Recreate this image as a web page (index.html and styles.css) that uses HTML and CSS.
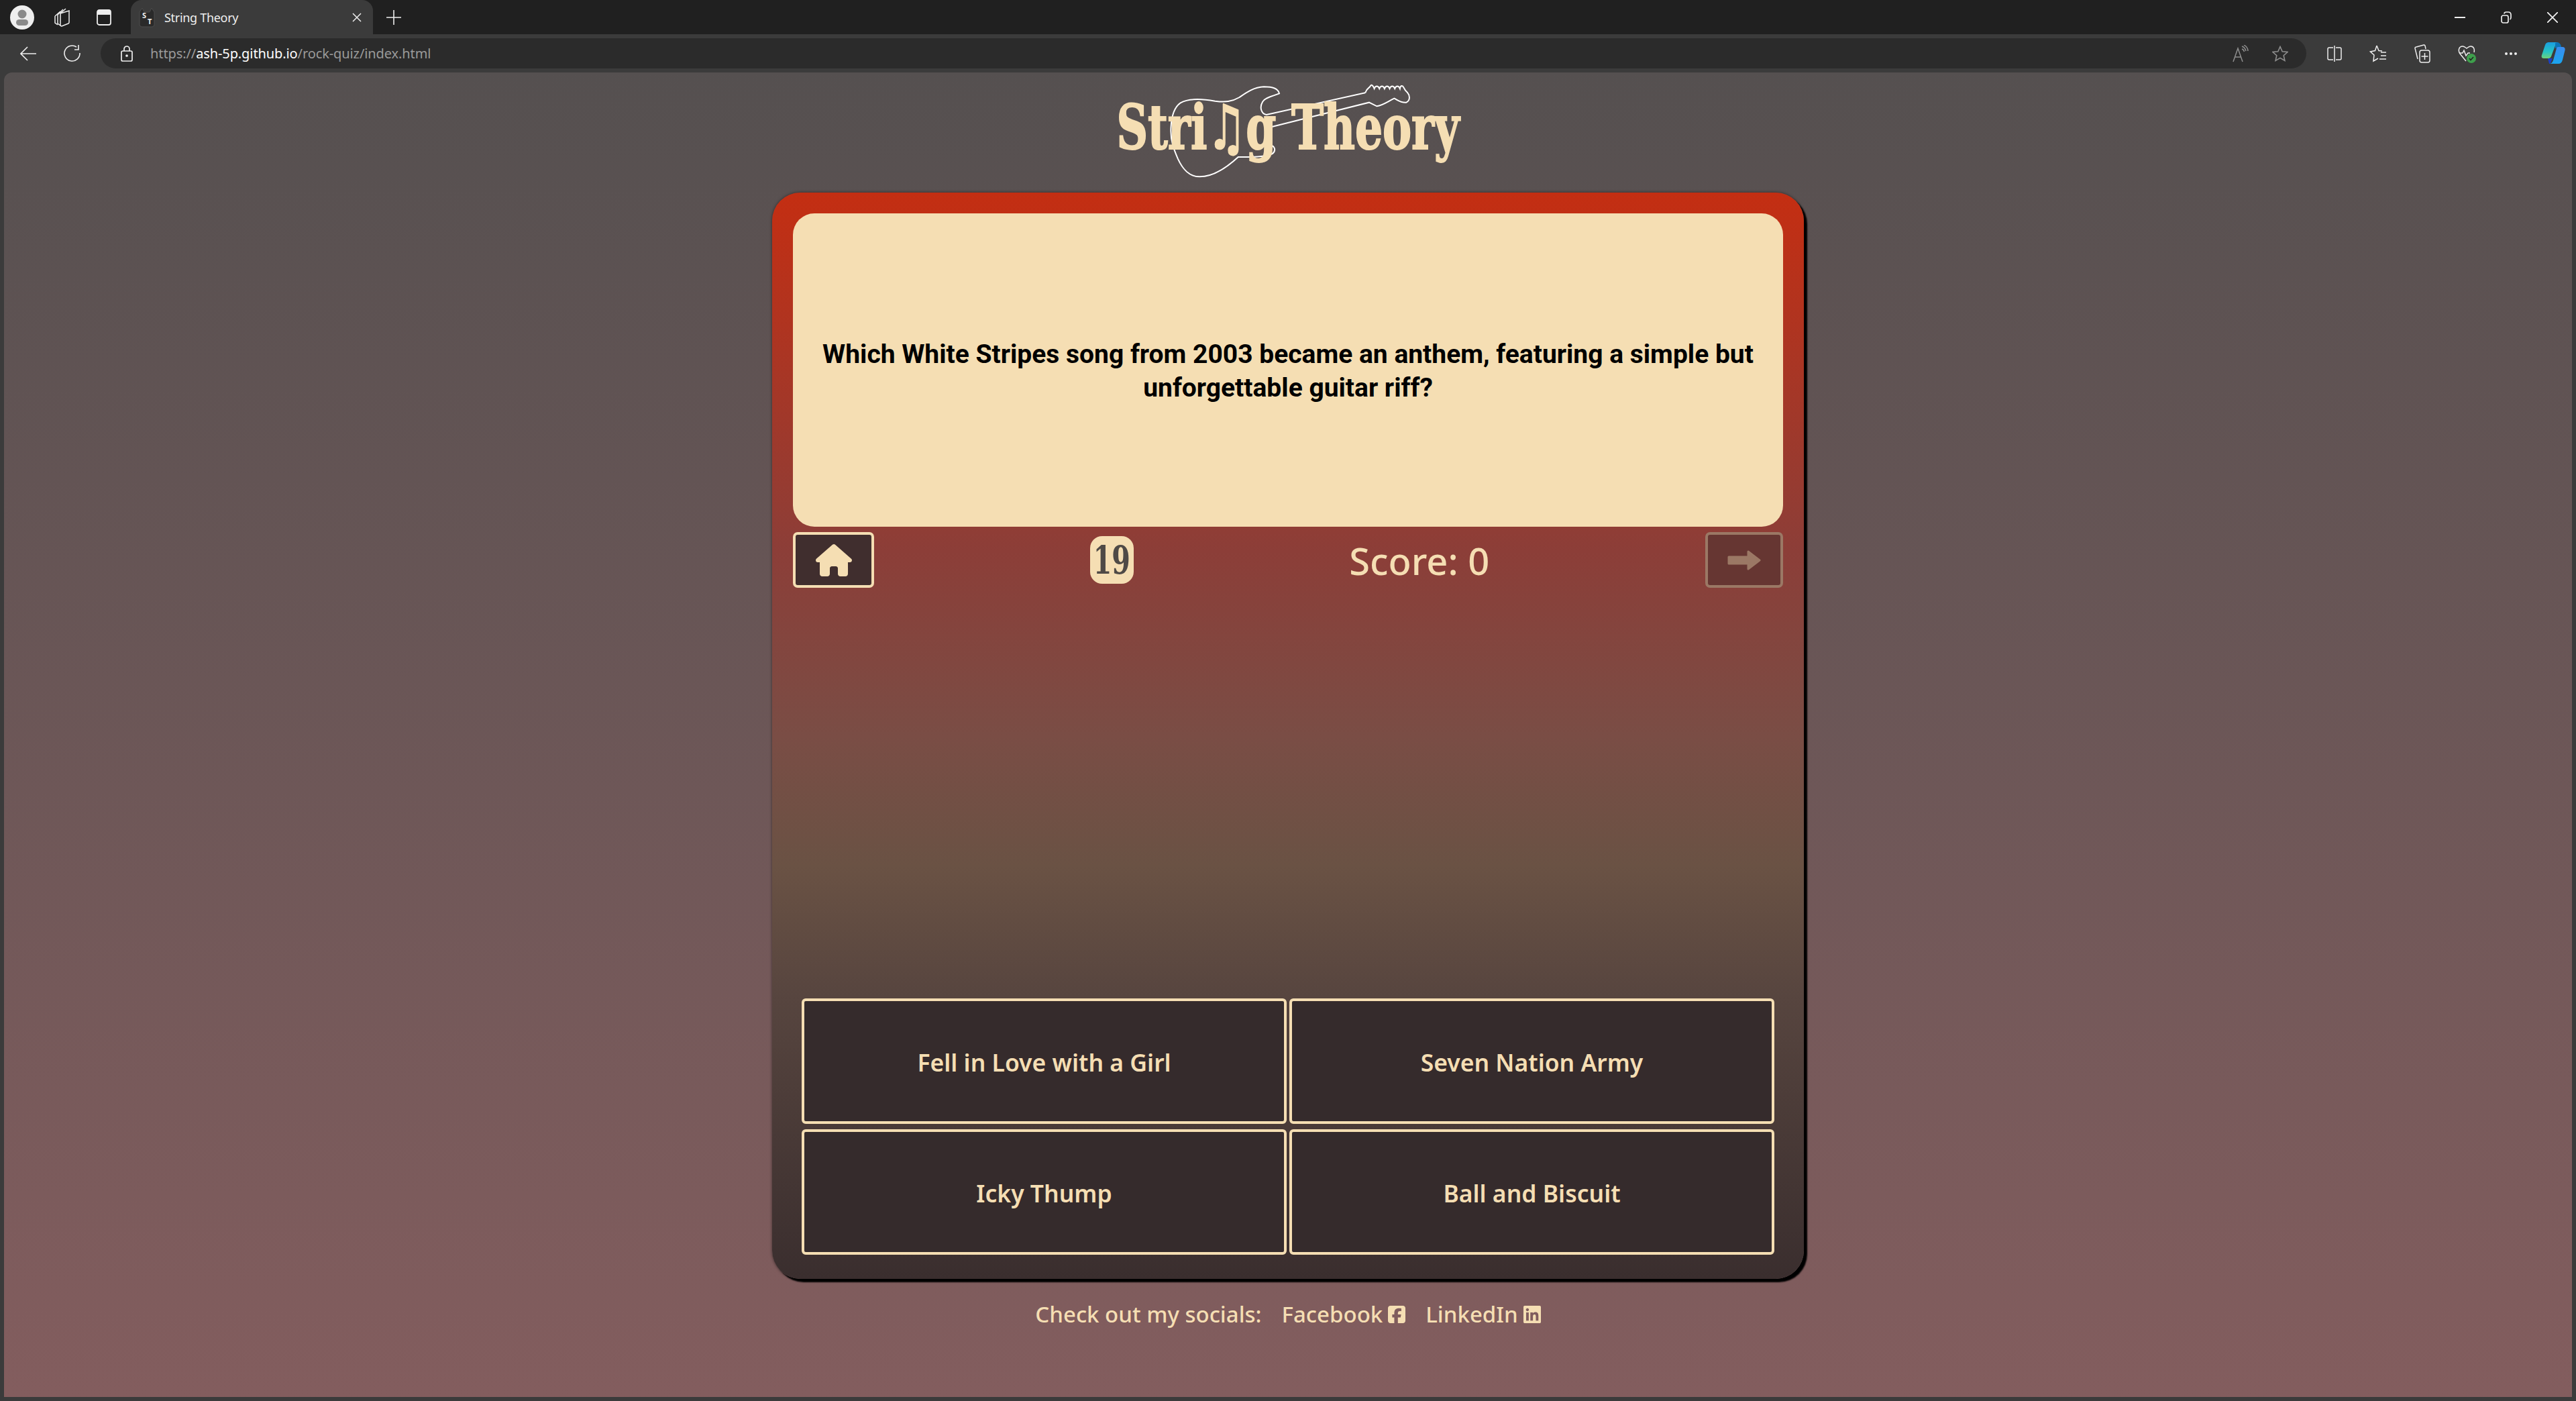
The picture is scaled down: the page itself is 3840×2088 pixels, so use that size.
FILE: index.html
```html
<!DOCTYPE html>
<html lang="en">
<head>
  <meta charset="UTF-8">
  <title>String Theory</title>
  <link rel="stylesheet" href="styles.css">
</head>
<body>

  <div class="tabstrip">
    <div class="avatar">
      <svg width="36" height="36" viewBox="0 0 36 36"><circle cx="18" cy="18" r="18" fill="#eee"/><circle cx="18" cy="13" r="6.5" fill="#8a8a8a"/><rect x="9" y="21" width="18" height="9" rx="4.5" fill="#8a8a8a"/></svg>
    </div>
    <svg class="strip-icon workspaces" width="26" height="30" viewBox="0 0 26 30" fill="none" stroke="#eee" stroke-width="1.500"><path d="M10 9 23 5v17a2 2 0 0 1-1 2l-10 4a2 2 0 0 1-2-2z"/><path d="M10 9 18 2M6 11 14 3M6 11v13l4 3M2 13 10 6M2 13v10l4 3"/></svg>
    <svg class="strip-icon verttabs" width="22" height="24" viewBox="0 0 22 24" fill="none" stroke="#eee" stroke-width="1.800"><rect x="1" y="1" width="20" height="22" rx="3"/><path d="M2 2h18v5H2z" fill="#eee"/></svg>
    <div class="tab">
      <svg class="favicon" width="24" height="30" viewBox="0 0 24 30"><path d="M5 1 8 7h8l3-6 4 6v20l-3 2H4l-3-2V7z" fill="#2a2a2a" stroke="#4c4c4c"/><text x="5" y="16" class="fav-letter">S</text><text x="13" y="25" class="fav-letter">T</text></svg>
      <span class="tab-title">String Theory</span>
      <svg class="tab-close" width="14" height="14" viewBox="0 0 14 14" stroke="#eee" stroke-width="1.500"><path d="M1 1l12 12M13 1 1 13"/></svg>
    </div>
    <svg class="newtab" width="22" height="22" viewBox="0 0 22 22" stroke="#eee" stroke-width="1.600"><path d="M11 0v22M0 11h22"/></svg>
    <div class="window-btns">
      <svg width="16" height="16" viewBox="0 0 16 16" stroke="#eee" stroke-width="2"><path d="M0 8h16"/></svg>
      <svg width="16" height="18" viewBox="0 0 16 18" fill="none" stroke="#eee" stroke-width="1.700"><rect x="1" y="6" width="10" height="11" rx="2.500"/><path d="M5 3.500C5 2 6 1 8 1h3c3 0 4 1.500 4 4v4c0 1.500-.5 2.500-1.500 3"/></svg>
      <svg width="16" height="16" viewBox="0 0 16 16" stroke="#eee" stroke-width="1.800"><path d="M0 0l16 16M16 0 0 16"/></svg>
    </div>
  </div>

  <div class="toolbar">
    <svg class="back" width="24" height="22" viewBox="0 0 24 22" fill="none" stroke="#eee" stroke-width="1.600"><path d="M24 11H1M11 1 1 11l10 10"/></svg>
    <svg class="reload" width="26" height="26" viewBox="0 0 26 26" fill="none" stroke="#eee" stroke-width="1.600"><path d="M19 3a11.500 11.500 0 1 0 5 9"/><path d="M19 1v7h-6" transform="translate(3 -1)"/></svg>
    <div class="addressbar">
      <svg class="lock" width="18" height="24" viewBox="0 0 18 24" fill="none" stroke="#eee" stroke-width="1.700"><rect x="1" y="8" width="16" height="15" rx="2"/><path d="M5 8V5a4 4 0 0 1 8 0v3"/><circle cx="9" cy="15" r="1" fill="#eee"/></svg>
      <span class="url">https://<b>ash-5p.github.io</b>/rock-quiz/index.html</span>
      <div class="addr-right">
        <svg width="24" height="26" viewBox="0 0 24 26" fill="none" stroke="#8f8f8f" stroke-width="1.500"><path d="M1 25 8 5l7 20M3.500 18h9"/><path d="M14 2c3 1 5 3 6 7M14 6c2 .5 3 2 3.500 4M17 0c3 2 6 4 6 9"/></svg>
        <svg width="24" height="24" viewBox="0 0 24 24" fill="none" stroke="#8f8f8f" stroke-width="1.600"><path d="M12 1.500l3.200 7.200 7.800.8-5.800 5.200 1.700 7.700L12 18.400l-6.900 4 1.700-7.700L1 9.500l7.800-.8z"/></svg>
      </div>
    </div>
    <div class="tool-icons">
      <svg width="22" height="26" viewBox="0 0 22 26" fill="none" stroke="#eee" stroke-width="1.500"><path d="M9 4H3a2 2 0 0 0-2 2v14a2 2 0 0 0 2 2h6M13 4h6a2 2 0 0 1 2 2v14a2 2 0 0 1-2 2h-6M11 1v24"/></svg>
      <svg width="26" height="28" viewBox="0 0 26 28" fill="none" stroke="#eee" stroke-width="1.500"><path d="M11 2 8.500 9.500 1.500 11l5.500 5-1 9 7-4M11 2l3 7.500 5 .5"/><path d="M17 12h8M17 17h8M15 22h10"/></svg>
      <svg width="24" height="28" viewBox="0 0 24 28" fill="none" stroke="#eee" stroke-width="1.500"><path d="M5 22 1 6a2 2 0 0 1 2-2l11-3a2 2 0 0 1 2 1l1 5"/><rect x="8" y="9" width="15" height="18" rx="3"/><path d="M15.500 13v10M10.500 18h10"/></svg>
      <svg width="28" height="30" viewBox="0 0 28 30" fill="none"><path d="M12 26 3 15C0 11 1 4 7 4c3 0 4 2 6 3 2-1 3-3 6-3 5 0 6 5 5 9" stroke="#eee" stroke-width="1.500"/><path d="M2 14h5l2-4 3 8 3-4h3" stroke="#eee" stroke-width="1.500"/><circle cx="20" cy="22" r="7" fill="#3e9f4c"/><path d="M17 22l2 2.500 4-4.500" stroke="#222" stroke-width="1.500"/></svg>
      <svg width="20" height="6" viewBox="0 0 20 6" fill="#eee"><circle cx="3" cy="3" r="2"/><circle cx="10" cy="3" r="2"/><circle cx="17" cy="3" r="2"/></svg>
      <svg class="copilot" width="36" height="36" viewBox="0 0 36 36">
        <defs>
          <linearGradient id="copA" x1="0" y1="0" x2="0" y2="1"><stop offset="0" stop-color="#1a9de0"/><stop offset=".6" stop-color="#27c4c2"/><stop offset="1" stop-color="#6fd07a"/></linearGradient>
          <linearGradient id="copB" x1="0" y1="0" x2="0" y2="1"><stop offset="0" stop-color="#3b8cf0"/><stop offset="1" stop-color="#1aa5ee"/></linearGradient>
        </defs>
        <path d="M10 25h7l-3 7c-.5 1-1 1-2 1z" fill="#1b3fc4"/>
        <path d="M11 1h16c-3 0-5 2-6 5L15 22c-1 2-2 3-4 3H4c-3 0-4-2-3-5L6 5c1-3 3-4 5-4z" fill="url(#copA)"/>
        <path d="M21 2c2-1 5-1 7 1 1 1 2 3 2 6l-9 1z" fill="#0b72b5"/>
        <path d="M25 8h7c3 0 4 2 3.500 5L32 27c-1 4-3 6-6 6H12c3 0 5-2 6-5l5-18c.3-1 1-2 2-2z" fill="url(#copB)"/>
      </svg>
    </div>
  </div>

  <main class="page">
    <header class="logo">
      <svg class="guitar" viewBox="0 0 1568 510" preserveAspectRatio="none" fill="none" stroke="#fff" stroke-width="2">
        <path vector-effect="non-scaling-stroke" d="M1085 85 700 183C680 180 672 150 685 125C695 105 725 100 750 88C745 65 725 58 690 58C650 60 620 85 595 105C565 125 540 128 500 122C450 112 395 110 365 130C340 150 330 190 328 240C325 300 340 340 355 380C375 430 400 460 440 460C490 460 540 425 590 372C640 372 700 372 722 358C738 345 735 322 712 318L690 322"/>
        <path vector-effect="non-scaling-stroke" d="M700 243 1100 128 1130 145C1155 140 1175 122 1198 110C1212 118 1222 130 1245 128C1262 118 1258 95 1250 85C1240 75 1238 70 1235 62C1230 50 1222 52 1220 66C1215 52 1205 52 1200 66C1195 52 1185 52 1180 66C1175 52 1165 52 1160 66C1155 52 1145 52 1140 66C1135 52 1125 52 1120 66C1115 50 1108 46 1105 55C1100 65 1092 62 1085 85"/>
      </svg>
      <h1 class="wordmark">Stri<span class="note">♫</span>g Theory</h1>
    </header>

    <section class="quiz-card">
      <div class="question">
        <p>Which White Stripes song from 2003 became an anthem, featuring a simple but unforgettable guitar riff?</p>
      </div>

      <div class="controls">
        <button class="square-btn">
          <svg width="54" height="48" viewBox="0 0 576 512" fill="#f5deb3"><path d="M575.800 255.500c0 18-15 32.100-32 32.100h-32l.7 160.200c0 2.700-.2 5.400-.5 8.100V472c0 22.100-17.900 40-40 40H456c-1.100 0-2.200 0-3.300-.1c-1.400 .1-2.800 .1-4.200 .1H416 392c-22.100 0-40-17.900-40-40V448 384c0-17.700-14.300-32-32-32H256c-17.700 0-32 14.300-32 32v64 24c0 22.100-17.900 40-40 40H160 128.100c-1.500 0-3-.1-4.500-.2c-1.200 .1-2.400 .2-3.600 .2H104c-22.100 0-40-17.900-40-40V360c0-.9 0-1.900 .1-2.800V287.600H32c-18 0-32-14-32-32.100c0-9 3-17 10-24L266.400 8c7-7 15-8 22-8s15 2 21 7L564.800 231.500c8 7 12 15 11 24z"/></svg>
        </button>
        <div class="timer"><span class="timer-num">19</span></div>
        <div class="score">Score: 0</div>
        <button class="square-btn next" disabled>
          <svg width="50" height="30" viewBox="0 0 50 30" fill="#9b7865" stroke="#9b7865" stroke-width="3" stroke-linejoin="round"><path d="M2 10h29V2l17 13-17 13v-8H2z"/></svg>
        </button>
      </div>

      <div class="answers">
        <button class="answer">Fell in Love with a Girl</button>
        <button class="answer">Seven Nation Army</button>
        <button class="answer">Icky Thump</button>
        <button class="answer">Ball and Biscuit</button>
      </div>
    </section>

    <footer class="socials">
      <span class="socials-label">Check out my socials:</span>
      <a href="#">Facebook <svg width="26" height="30" viewBox="0 0 448 512" fill="#f5deb3"><path d="M64 32C28.700 32 0 60.700 0 96V416c0 35.300 28.700 64 64 64h98.200V334.200H109.400V256h52.800V222.300c0-87.100 39.400-127.500 125-127.500c16.200 0 44.200 3.200 55.700 6.400V172c-6-.6-16.500-1-29.600-1c-42 0-58.200 15.900-58.200 57.200V256h83.600l-14.400 78.200H255V480H384c35.300 0 64-28.700 64-64V96c0-35.300-28.700-64-64-64H64z"/></svg></a>
      <a href="#">LinkedIn <svg width="26" height="30" viewBox="0 0 448 512" fill="#f5deb3"><path d="M416 32H31.900C14.300 32 0 46.500 0 64.300v383.400C0 465.500 14.300 480 31.900 480H416c17.600 0 32-14.500 32-32.300V64.300c0-17.800-14.400-32.300-32-32.300zM135.400 416H69V202.200h66.500V416zm-33.200-243c-21.300 0-38.500-17.300-38.500-38.500S80.900 96 102.200 96c21.200 0 38.500 17.300 38.500 38.500 0 21.300-17.200 38.500-38.500 38.500zm282.100 243h-66.400V312c0-24.800-.5-56.700-34.500-56.700-34.600 0-39.900 27-39.900 54.900V416h-66.400V202.200h63.700v29.200h.9c8.900-16.800 30.600-34.500 62.900-34.500 67.200 0 79.700 44.300 79.700 101.900V416z"/></svg></a>
    </footer>
  </main>

</body>
</html>
```
FILE: styles.css
```css
* {
  box-sizing: border-box;
}

html, body {
  margin: 0;
  height: 100%;
}

body {
  width: 3840px;
  height: 2088px;
  overflow: hidden;
  display: flex;
  flex-direction: column;
  background: #3b3b3b;
  font-family: "Noto Sans", sans-serif;
}

/* browser chrome */
.tabstrip {
  height: 51px;
  flex: none;
  display: flex;
  align-items: center;
  background: #202020;
}

.avatar {
  margin-left: 15px;
  height: 36px;
}

.workspaces {
  margin-left: 29px;
}

.verttabs {
  margin-left: 38px;
}

.tab {
  width: 361px;
  height: 51px;
  margin-left: 29px;
  padding: 0 17px 0 12px;
  display: flex;
  align-items: center;
  background: #3b3b3b;
  border-radius: 16px 16px 0 0;
}

.fav-letter {
  font: bold 11px "Noto Sans", sans-serif;
  fill: #eee;
}

.tab-title {
  margin-left: 14px;
  flex: 1;
  color: #eee;
  font-size: 18px;
  letter-spacing: -0.3px;
}

.newtab {
  margin-left: 20px;
}

.window-btns {
  margin-left: auto;
  margin-right: 27px;
  display: flex;
  align-items: center;
  gap: 53px;
}

.toolbar {
  height: 57px;
  flex: none;
  display: flex;
  align-items: center;
}

.back {
  margin-left: 30px;
}

.reload {
  margin-left: 41px;
}

.addressbar {
  width: 3288px;
  height: 45px;
  margin-left: 29px;
  padding: 0 27px 0 30px;
  display: flex;
  align-items: center;
  background: #2b2b2b;
  border-radius: 23px;
}

.url {
  margin-left: 26px;
  color: #9a9a9a;
  font-size: 20px;
  letter-spacing: -0.1px;
}

.url b {
  color: #fff;
  font-weight: 400;
}

.addr-right {
  margin-left: auto;
  display: flex;
  align-items: center;
  gap: 35px;
}

.tool-icons {
  margin-left: 31px;
  display: flex;
  align-items: center;
  gap: 41px;
}

.copilot {
  margin-left: -6px;
}

/* the page itself */
.page {
  flex: 1;
  margin: 0 6px 6px;
  border-radius: 12px 12px 0 0;
  display: flex;
  flex-direction: column;
  align-items: center;
  background: linear-gradient(#555050, #835d5e);
  color: #f5deb3;
}

.logo {
  position: relative;
  width: 600px;
  height: 179px;
  flex: none;
}

.guitar {
  position: absolute;
  left: 0;
  top: 2px;
  width: 600px;
  height: 170px;
}

.wordmark {
  position: relative;
  margin: 0 0 0 -100px;
  padding-top: 30px;
  width: 800px;
  text-align: center;
  font-family: "DejaVu Serif", serif;
  font-size: 92px;
  line-height: 104px;
  font-weight: 700;
  font-stretch: condensed;
  white-space: nowrap;
  -webkit-text-stroke: 2px #f5deb3;
  transform: scaleX(0.78);
}

.note {
  font-family: "DejaVu Sans", sans-serif;
  font-size: 92px;
  font-weight: 400;
}

.quiz-card {
  width: 1538px;
  height: 1619px;
  flex: none;
  padding: 31px 31px 36px;
  display: flex;
  flex-direction: column;
  border-radius: 42px;
  background: linear-gradient(#c42e12, #8c3e38 33%, #7a4d45 50%, #6a5244 62%, #57453f 74%, #3a2e2e);
  box-shadow: 5px 5px 2px #000, 0 0 4px rgba(0, 0, 0, 0.5);
}

.question {
  height: 467px;
  flex: none;
  padding: 0 30px;
  display: flex;
  align-items: center;
  background: #f5deb3;
  border-radius: 32px;
}

.question p {
  margin: 0;
  padding-top: 2px;
  width: 100%;
  text-align: center;
  color: #000;
  font-family: Roboto, sans-serif;
  font-size: 39px;
  line-height: 50px;
  font-weight: 700;
}

.controls {
  margin-top: 8px;
  display: flex;
  align-items: center;
  justify-content: space-between;
}

.square-btn {
  width: 121px;
  height: 83px;
  padding: 0;
  display: flex;
  align-items: center;
  justify-content: center;
  background: #402e2e;
  border: 4px solid #f5deb3;
  border-radius: 7px;
}

.square-btn.next {
  width: 116px;
  background: #663632;
  border-color: #9b7865;
}

.timer {
  width: 65px;
  height: 71px;
  display: flex;
  align-items: center;
  justify-content: center;
  background: #f5deb3;
  border-radius: 18px;
  color: #4f4a46;
  font-family: "DejaVu Serif", serif;
  font-size: 58px;
  line-height: 1;
  font-weight: 700;
  font-stretch: condensed;
}

.timer-num {
  transform: scaleX(0.76);
}

.score {
  font-size: 56px;
  font-weight: 500;
}

.answers {
  margin: auto 13px 0;
  display: grid;
  grid-template-columns: 1fr 1fr;
  column-gap: 4px;
  row-gap: 8px;
}

.answer {
  height: 187px;
  padding: 2px 0 0;
  background: #352b2c;
  border: 4px solid #f5deb3;
  border-radius: 6px;
  color: #f5deb3;
  font-family: "Noto Sans", sans-serif;
  font-size: 35.5px;
  font-weight: 600;
}

.socials {
  margin-top: 30px;
  display: flex;
  align-items: center;
  font-size: 33px;
  font-weight: 500;
}

.socials a {
  margin-left: 30px;
  display: flex;
  align-items: center;
  gap: 8px;
  color: #f5deb3;
  text-decoration: none;
}
```
